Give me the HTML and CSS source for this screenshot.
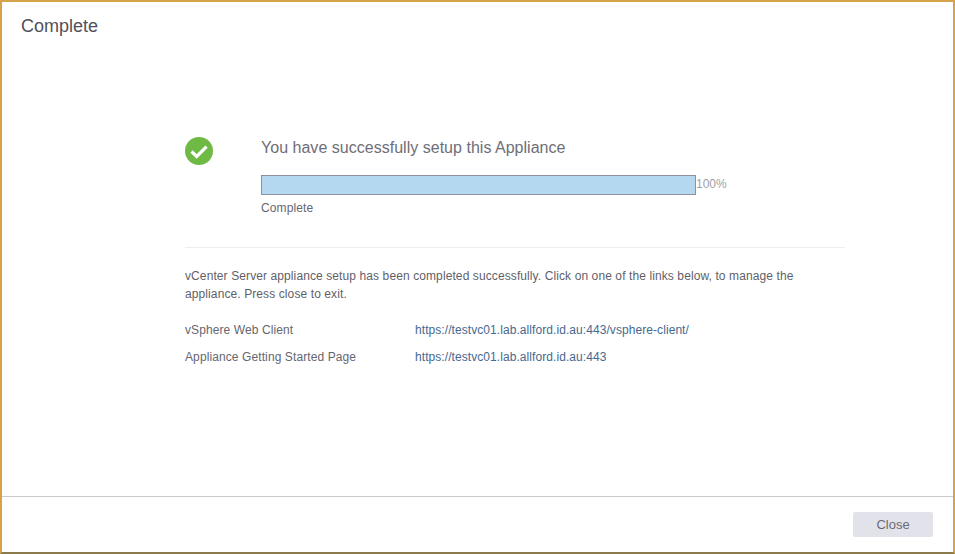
FILE: index.html
```html
<!DOCTYPE html>
<html lang="en">
<head>
<meta charset="utf-8">
<title>Complete</title>
<link rel="stylesheet" href="styles.css">
</head>
<body>
<div class="dialog">
  <header class="dialog-header">Complete</header>
  <main class="dialog-body">
    <section class="status">
      <svg class="status-icon" width="28" height="28" viewBox="0 0 28 28" aria-hidden="true">
        <circle cx="14" cy="14" r="14" fill="#6fba45"/>
        <path d="M6.5 14.5l5.2 5L21.6 9.6" fill="none" stroke="#fff" stroke-width="3.2"/>
      </svg>
      <div class="status-main">
        <h1 class="status-title">You have successfully setup this Appliance</h1>
        <div class="progress-row">
          <div class="progress-bar"></div>
          <span class="progress-value">100%</span>
        </div>
        <div class="progress-label">Complete</div>
      </div>
    </section>
    <hr class="divider">
    <p class="message">vCenter Server appliance setup has been completed successfully. Click on one of the links below, to manage the appliance. Press close to exit.</p>
    <div class="links">
      <span class="link-label">vSphere Web Client</span>
      <a class="link-url" href="#">https://testvc01.lab.allford.id.au:443/vsphere-client/</a>
      <span class="link-label">Appliance Getting Started Page</span>
      <a class="link-url" href="#">https://testvc01.lab.allford.id.au:443</a>
    </div>
  </main>
  <footer class="dialog-footer">
    <button class="close-button" type="button">Close</button>
  </footer>
</div>
</body>
</html>
```
FILE: styles.css
```css
* { box-sizing: border-box; }
html, body { margin: 0; height: 100%; }
body {
  font-family: "Liberation Sans", Arial, sans-serif;
  font-size: 12px;
  color: #565660;
  background: #fff;
  overflow: hidden;
}
.dialog {
  display: flex;
  flex-direction: column;
  width: 955px;
  height: 554px;
  background: #fff;
  border: 2px solid #d6a24c;
  border-bottom-color: #8a7a4c;
}
.dialog-header {
  flex: none;
  height: 43px;
  padding: 14px 0 0 19px;
  font-size: 18px;
  line-height: 20px;
  color: #50505a;
}
.dialog-body {
  flex: 1;
  padding: 92px 108px 0 183px;
}
.status { display: flex; }
.status-icon { flex: none; margin-right: 48px; }
.status-main { flex: 1; padding-top: 1px; }
.status-title {
  margin: 0;
  font-size: 16px;
  font-weight: 400;
  line-height: 20px;
  letter-spacing: .02px;
  color: #6e6e77;
}
.progress-row {
  display: flex;
  align-items: center;
  margin-top: 17px;
}
.progress-bar {
  width: 435px;
  height: 20px;
  background: #b3d8f0;
  border: 1px solid #8f8f9e;
}
.progress-value { padding-bottom: 2px; color: #a0a0a6; }
.progress-label {
  margin-top: 6px;
  line-height: 14px;
  letter-spacing: .1px;
  color: #66666f;
}
.divider {
  height: 1px;
  margin: 32px 0 0;
  border: 0;
  background: #eeeef2;
}
.message {
  margin: 19px 0 0;
  line-height: 18px;
  letter-spacing: .1px;
  color: #5f5f69;
}
.links {
  display: grid;
  grid-template-columns: 230px 1fr;
  grid-auto-rows: 27px;
  align-items: center;
  margin-top: 13px;
}
.link-label { letter-spacing: .1px; color: #66666f; }
.link-url { letter-spacing: .07px; color: #46698f; text-decoration: none; }
.dialog-footer {
  flex: none;
  display: flex;
  justify-content: flex-end;
  align-items: flex-start;
  height: 56px;
  padding: 15px 20px 0 0;
  border-top: 1px solid #c9c9ce;
}
.close-button {
  width: 80px;
  height: 25px;
  padding: 0;
  font: inherit;
  font-size: 13px;
  color: #6a6a74;
  background: #e2e2ea;
  border: 0;
  border-radius: 2px;
}
```
